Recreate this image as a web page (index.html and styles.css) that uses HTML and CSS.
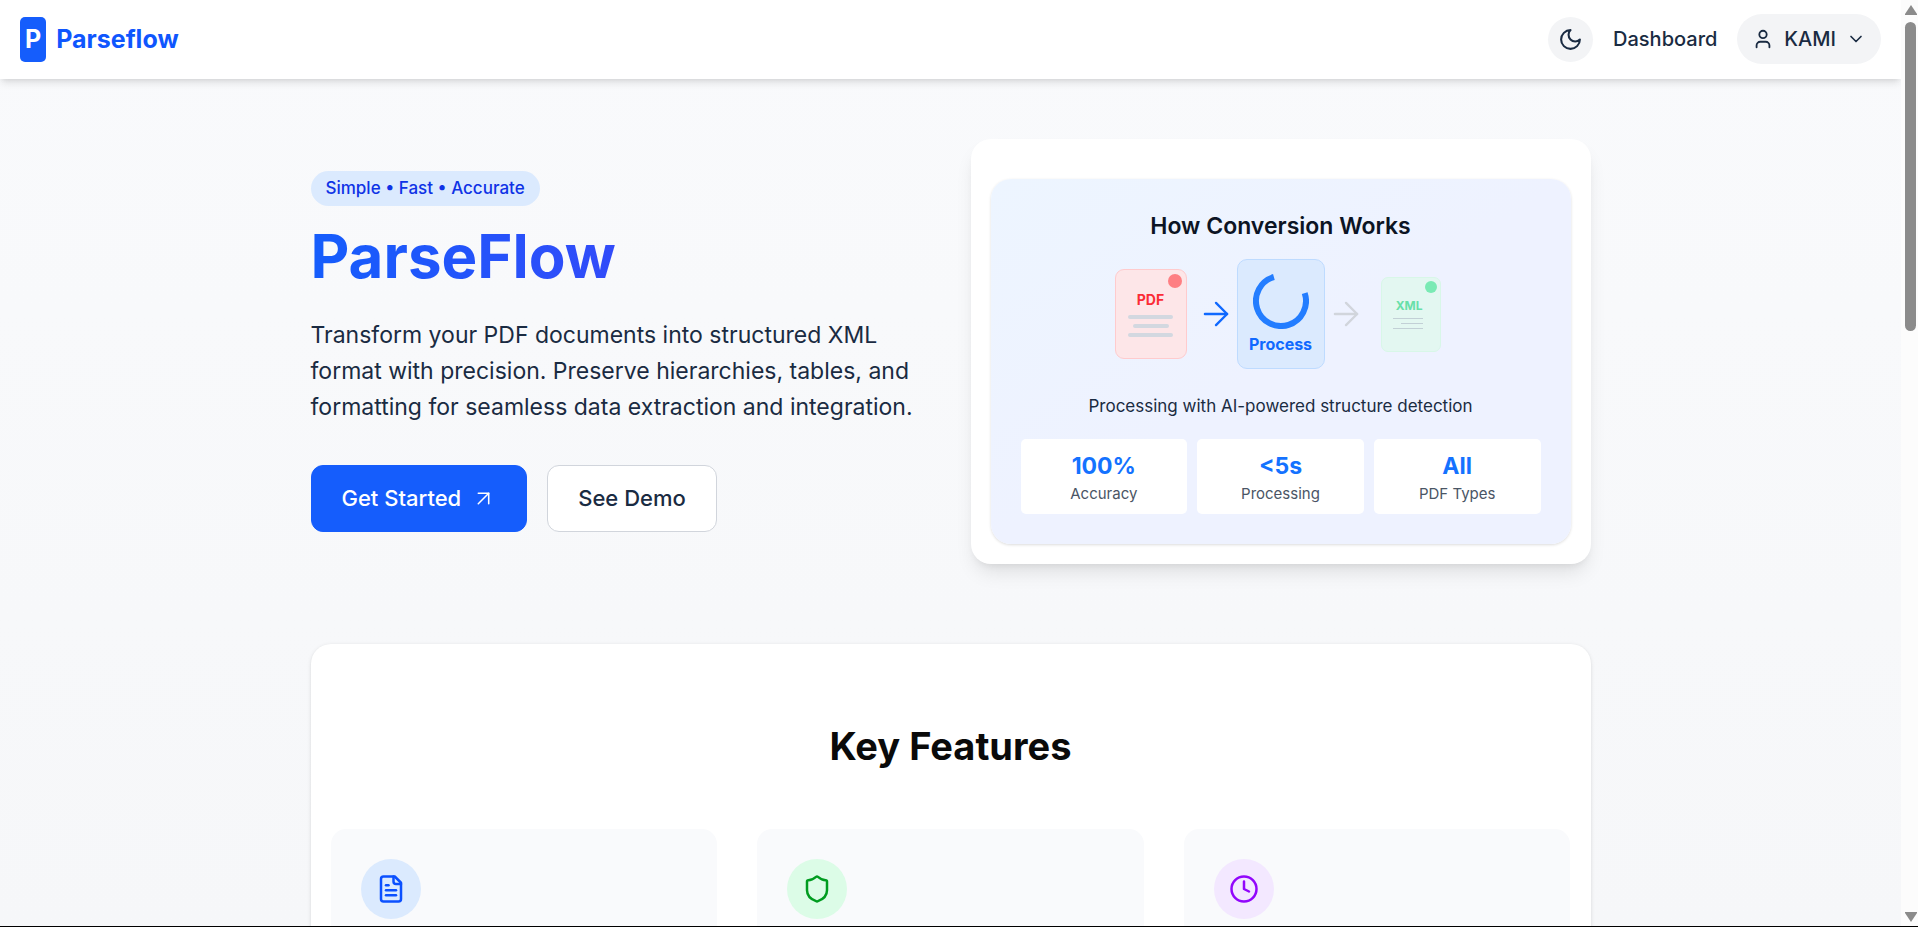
FILE: index.html
```html
<!DOCTYPE html>
<html lang="en">
<head>
<meta charset="utf-8">
<title>Parseflow</title>
<link rel="stylesheet" href="styles.css">
</head>
<body>
<div class="window">
  <div class="page">
    <header class="topbar">
      <a class="brand" href="#"><span class="brand-mark">P</span><span class="brand-name">Parseflow</span></a>
      <nav class="nav">
        <button class="theme-toggle" type="button" aria-label="Toggle dark mode">
          <svg class="icon icon-25" viewBox="0 0 24 24"><path d="M12 3a6 6 0 0 0 9 9 9 9 0 1 1-9-9Z"/></svg>
        </button>
        <a class="nav-link" href="#">Dashboard</a>
        <button class="user-menu" type="button">
          <svg class="icon icon-22" viewBox="0 0 24 24"><path d="M19 21v-2a4 4 0 0 0-4-4H9a4 4 0 0 0-4 4v2"/><circle cx="12" cy="7" r="4"/></svg>
          <span>KAMI</span>
          <svg class="icon icon-20" viewBox="0 0 24 24"><path d="m6 9 6 6 6-6"/></svg>
        </button>
      </nav>
    </header>
    <main class="content">
      <section class="hero">
        <div class="intro">
          <span class="badge">Simple • Fast • Accurate</span>
          <h1 class="title">ParseFlow</h1>
          <p class="lead">Transform your PDF documents into structured XML format with precision. Preserve hierarchies, tables, and formatting for seamless data extraction and integration.</p>
          <div class="actions">
            <a class="btn btn-primary" href="#">Get Started
              <svg class="icon icon-25 icon-thin" viewBox="0 0 24 24"><path d="M7 7h10v10"/><path d="M7 17 17 7"/></svg>
            </a>
            <a class="btn btn-outline" href="#">See Demo</a>
          </div>
        </div>
        <div class="demo">
          <div class="demo-panel">
            <h2 class="demo-title">How Conversion Works</h2>
            <div class="flow">
              <div class="doc doc-pdf">
                <i class="dot"></i>
                <span class="doc-label">PDF</span>
                <i class="line"></i><i class="line line-short"></i><i class="line"></i>
              </div>
              <svg class="icon icon-thin arrow arrow-active" viewBox="0 0 24 24"><path d="M5 12h14"/><path d="m12 5 7 7-7 7"/></svg>
              <div class="process">
                <svg class="spinner" viewBox="0 0 56 56"><path d="M51.700 20.100A25 25 0 1 1 20.900 4"/></svg>
                <span>Process</span>
              </div>
              <svg class="icon icon-thin arrow" viewBox="0 0 24 24"><path d="M5 12h14"/><path d="m12 5 7 7-7 7"/></svg>
              <div class="doc doc-xml">
                <i class="dot"></i>
                <span class="doc-label">XML</span>
                <i class="line"></i><i class="line line-short"></i><i class="line"></i>
              </div>
            </div>
            <p class="caption">Processing with AI-powered structure detection</p>
            <div class="stats">
              <div class="stat"><strong>100%</strong><span>Accuracy</span></div>
              <div class="stat"><strong>&lt;5s</strong><span>Processing</span></div>
              <div class="stat"><strong>All</strong><span>PDF Types</span></div>
            </div>
          </div>
        </div>
      </section>
      <section class="features">
        <h2 class="features-title">Key Features</h2>
        <div class="feature-grid">
          <article class="feature">
            <span class="feature-icon blue"><svg class="icon icon-30" viewBox="0 0 24 24"><path d="M15 2H6a2 2 0 0 0-2 2v16a2 2 0 0 0 2 2h12a2 2 0 0 0 2-2V7Z"/><path d="M14 2v4a2 2 0 0 0 2 2h4"/><path d="M10 9H8"/><path d="M16 13H8"/><path d="M16 17H8"/></svg></span>
          </article>
          <article class="feature">
            <span class="feature-icon green"><svg class="icon icon-30" viewBox="0 0 24 24"><path d="M20 13c0 5-3.500 7.500-7.660 8.950a1 1 0 0 1-.67-.01C7.500 20.500 4 18 4 13V6a1 1 0 0 1 1-1c2 0 4.500-1.200 6.240-2.720a1.170 1.170 0 0 1 1.520 0C14.510 3.810 17 5 19 5a1 1 0 0 1 1 1z"/></svg></span>
          </article>
          <article class="feature">
            <span class="feature-icon purple"><svg class="icon icon-30" viewBox="0 0 24 24"><circle cx="12" cy="12" r="10"/><path d="M12 6v6l4 2"/></svg></span>
          </article>
        </div>
      </section>
    </main>
  </div>
  <div class="scrollbar" aria-hidden="true">
    <svg class="scroll-arrow" viewBox="0 0 12 10"><path d="M6 0 12 9v1H0V9Z"/></svg>
    <div class="scroll-track"><div class="scroll-thumb"></div></div>
    <svg class="scroll-arrow" viewBox="0 0 12 10"><path d="M6 10 12 1V0H0v1Z"/></svg>
  </div>
</div>
</body>
</html>
```
FILE: styles.css
```css
* { box-sizing: border-box; margin: 0; }

body {
  font-family: Inter, "Liberation Sans", sans-serif;
  font-size: 20px;
  line-height: 30px;
  color: #1a2b42;
}

a { color: inherit; text-decoration: none; }
button { font: inherit; color: inherit; border: 0; }

.window {
  display: grid;
  grid-template-columns: 1fr 17px;
  height: 100vh;
  overflow: hidden;
  border-bottom: 1px solid #000;
}

.page {
  min-width: 0;
  overflow: hidden;
  background: linear-gradient(#f9fafc, #f6f7f9);
}

.icon {
  fill: none;
  stroke: currentColor;
  stroke-width: 2;
  stroke-linecap: round;
  stroke-linejoin: round;
  flex: none;
}
.icon-thin { stroke-width: 1.5; }
.icon-20 { width: 20px; height: 20px; }
.icon-22 { width: 22px; height: 22px; }
.icon-25 { width: 25px; height: 25px; }
.icon-30 { width: 30px; height: 30px; }

/* Top bar */
.topbar {
  position: relative;
  display: flex;
  align-items: center;
  justify-content: space-between;
  padding: 14px 20px 15px;
  background: #fff;
  box-shadow: 0 5px 8px -1px rgba(0, 0, 0, .1), 0 3px 5px -3px rgba(0, 0, 0, .1);
}
.brand {
  display: flex;
  align-items: center;
  gap: 10px;
  font-size: 25px;
  line-height: 35px;
  font-weight: 700;
  color: #0f56fe;
}
.brand-mark {
  padding: 5px;
  border-radius: 5px;
  background: #155dfc;
  color: #fff;
}
.nav { display: flex; align-items: center; gap: 20px; }
.nav-link { font-weight: 500; }
.theme-toggle {
  display: grid;
  padding: 10px;
  border-radius: 50%;
  background: #f3f4f6;
}
.user-menu {
  display: flex;
  align-items: center;
  gap: 10px;
  padding: 10px 15px;
  border-radius: 25px;
  background: #f3f4f6;
  font-weight: 500;
}

/* Hero */
.content {
  max-width: 1280px;
  margin: 0 auto;
  padding-top: 60px;
}
.hero {
  display: grid;
  grid-template-columns: 1fr 1fr;
  gap: 40px;
  align-items: center;
  margin-bottom: 80px;
}
.intro { display: flex; flex-direction: column; align-items: flex-start; }
.badge {
  padding: 5px 15px;
  border-radius: 18px;
  background: #dbeafe;
  color: #0f33e6;
  font-size: 17px;
  line-height: 25px;
  font-weight: 500;
}
.title {
  align-self: stretch;
  margin: 20px 0 31px;
  font-size: 60px;
  line-height: 60px;
  font-weight: 700;
  color: transparent;
  background: linear-gradient(to right, #155dfc, #4f39f6);
  background-clip: text;
}
.lead { font-size: 23px; line-height: 36px; margin-bottom: 40px; }
.actions { display: flex; gap: 20px; }
.btn {
  display: flex;
  align-items: center;
  gap: 10px;
  padding: 15px 30px;
  border: 1px solid #155dfc;
  border-radius: 12px;
  font-size: 22px;
  line-height: 35px;
  font-weight: 500;
}
.btn-primary { background: #155dfc; color: #fff; }
.btn-outline { background: #fff; border-color: #d1d5dc; }

/* Conversion demo */
.demo {
  padding: 40px 20px 20px;
  border-radius: 20px;
  background: #fff;
  box-shadow: 0 12px 19px -4px rgba(0, 0, 0, .1), 0 5px 8px -5px rgba(0, 0, 0, .1);
}
.demo-panel {
  padding: 30px;
  border-radius: 20px;
  background: linear-gradient(to bottom right, #edf5ff, #eef2ff 50%, #eef2ff);
  box-shadow: 0 1px 3px rgba(0, 0, 0, .14);
  text-align: center;
}
.demo-title {
  margin-bottom: 15px;
  font-size: 23px;
  line-height: 35px;
  font-weight: 600;
  color: #0c1424;
}
.flow {
  display: grid;
  grid-template-columns: 80px 38px 80px 38px 80px;
  gap: 6px;
  align-items: center;
  justify-content: center;
  justify-items: center;
  margin-bottom: 25px;
}
.doc {
  position: relative;
  display: flex;
  flex-direction: column;
  align-items: center;
  border: 1px solid;
}
.doc-label { font-weight: 700; }
.dot { position: absolute; border-radius: 50%; }
.doc-pdf {
  width: 72px;
  height: 90px;
  padding-top: 20px;
  gap: 5px;
  border-color: #ffcbcd;
  border-radius: 9px;
  background: #fde6e8;
}
.doc-pdf .doc-label { font-size: 14px; line-height: 20px; color: #fb2c36; }
.doc-pdf .dot { top: 4px; right: 4px; width: 14px; height: 14px; background: #fe7f83; }
.doc-pdf .line { width: 45px; height: 4px; border-radius: 2px; background: #d3d8e0; }
.doc-pdf .line-short { width: 36px; }
.doc-xml {
  width: 60px;
  height: 75px;
  padding: 20px 17px 0 10px;
  gap: 4px;
  align-items: flex-end;
  border-color: #d8f7e8;
  border-radius: 7px;
  background: #e3f7f1;
}
.doc-xml .doc-label { font-size: 12px; line-height: 16px; color: #68e0a8; }
.doc-xml .dot { top: 3px; right: 3px; width: 12px; height: 12px; background: #7aeab4; }
.doc-xml .line { width: 30px; height: 1px; background: #c2d0d6; }
.doc-xml .line-short { width: 22px; }
.process {
  display: flex;
  flex-direction: column;
  align-items: center;
  gap: 4px;
  width: 88px;
  height: 110px;
  padding-top: 13px;
  border: 1px solid #bedbff;
  border-radius: 10px;
  background: #dbeafe;
  color: #1069ff;
  font-size: 16px;
  line-height: 22px;
  font-weight: 700;
}
.spinner { width: 56px; height: 56px; fill: none; stroke: #237dff; stroke-width: 6; }
.arrow { width: 38px; height: 38px; color: #d1d5dc; }
.arrow-active { color: #1069ff; }
.caption { margin-bottom: 20px; font-size: 17px; line-height: 25px; }
.stats { display: grid; grid-template-columns: repeat(3, 1fr); gap: 10px; }
.stat {
  display: grid;
  padding: 10px;
  border-radius: 5px;
  background: #fff;
}
.stat strong { font-size: 23px; line-height: 35px; font-weight: 700; color: #1472ff; }
.stat span { font-size: 15px; line-height: 20px; color: #4a5565; }

/* Features */
.features {
  padding: 80px 20px;
  border-radius: 20px;
  background: #fff;
  box-shadow: 0 1px 4px rgba(0, 0, 0, .1), 0 1px 3px -1px rgba(0, 0, 0, .1);
}
.features-title {
  margin-bottom: 60px;
  font-size: 38px;
  line-height: 45px;
  font-weight: 700;
  text-align: center;
  color: #0a0a0a;
}
.feature-grid { display: grid; grid-template-columns: repeat(3, 1fr); gap: 40px; }
.feature {
  min-height: 280px;
  padding: 30px;
  border-radius: 15px;
  background: #f9fafc;
}
.feature-icon {
  display: grid;
  place-items: center;
  width: 60px;
  height: 60px;
  border-radius: 50%;
}
.blue { background: #dbeafe; color: #0b50ff; }
.green { background: #dcfce7; color: #009c20; }
.purple { background: #f3e8ff; color: #9206fc; }

/* Scrollbar */
.scrollbar {
  display: flex;
  flex-direction: column;
  align-items: center;
  gap: 7px;
  padding: 5px 0 4px 2px;
  background: #fcfcfc;
}
.scroll-arrow { width: 12px; height: 10px; fill: #8b8b8b; flex: none; }
.scroll-track { flex: 1; width: 11px; }
.scroll-thumb { height: 35%; border-radius: 6px; background: #8b8b8b; }
```
